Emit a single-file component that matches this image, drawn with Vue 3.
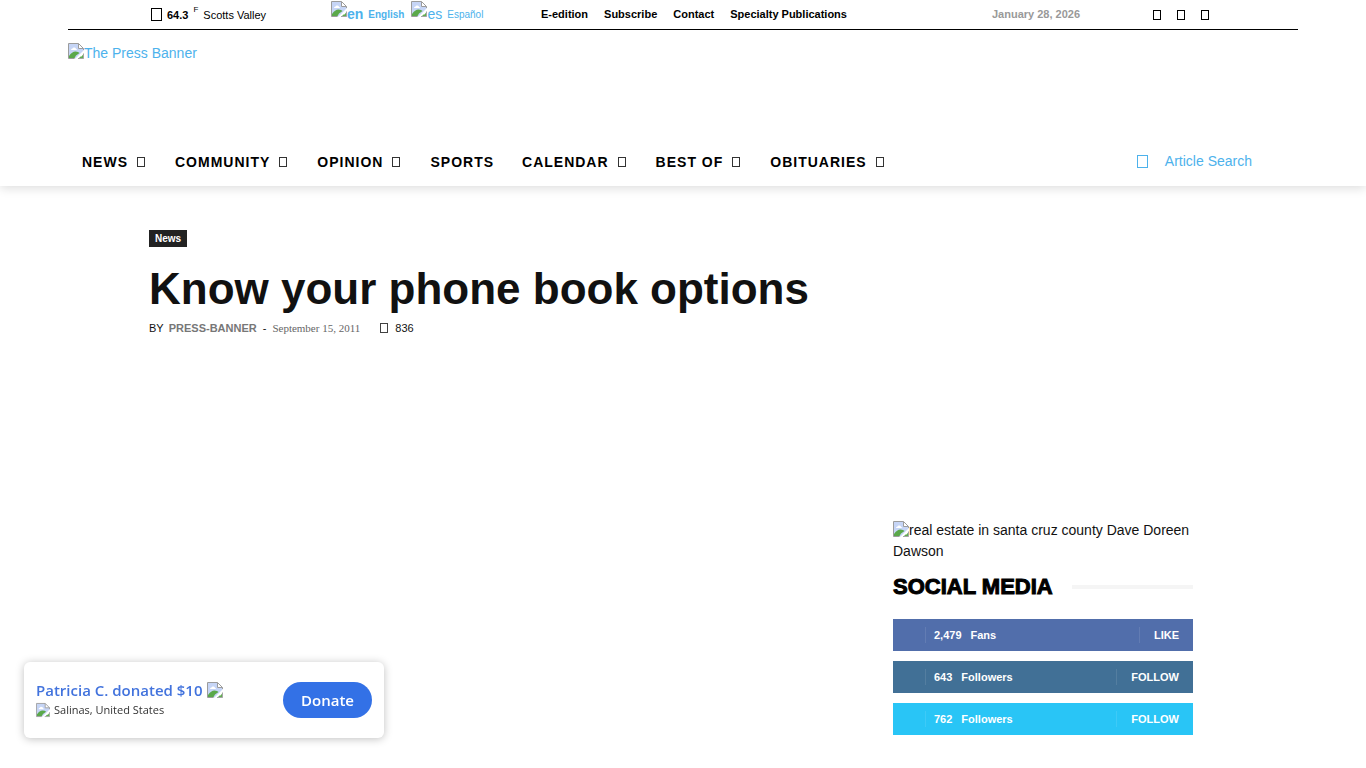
<template>
  <div class="page">
    <svg class="symbols" aria-hidden="true">
      <symbol id="broken-image" viewBox="0 0 16 16">
        <path d="M0.5 0.5H10.500L15.500 5.500V7.500L7.500 15.500H0.5Z" fill="#c6d5f6" />
        <path d="M3 7Q3 5.500 4.500 5.500Q5 4 6.500 4.500Q8 4.500 8 6Q9 6 9 7Z" fill="#fff" />
        <path d="M1 15V13Q4 8.500 7.500 8.500Q10.500 8.500 11.500 10L8 12.500L6.500 15Z" fill="#5aa84a" />
        <path d="M0.5 15.500V0.5H10.500M0.5 15.500H6.500M15.500 5.500V7" fill="none" stroke="#9c9c9c" />
        <path d="M10.500 0.5V5.500H15.500Z" fill="#fff" stroke="#9c9c9c" />
        <path d="M15.500 11V15.500H10.500L12.500 13.500H13.500Z" fill="#62ac52" />
        <path d="M15.500 10.500V15.500H10" fill="none" stroke="#a5a5a5" />
      </symbol>
    </svg>

    <header class="site-header">
      <div class="top-bar">
        <div class="weather">
          <i class="glyph glyph-large"></i>
          <b>64.3</b>
          <sup>F</sup>
          <span>Scotts Valley</span>
        </div>
        <div class="languages">
          <a href="#" class="current">
            <svg class="broken"><use href="#broken-image" /></svg><span class="alt">en</span>
            <span class="lang-name">English</span>
          </a>
          <a href="#">
            <svg class="broken"><use href="#broken-image" /></svg><span class="alt">es</span>
            <span class="lang-name">Español</span>
          </a>
        </div>
        <nav class="top-menu">
          <a v-for="link in topLinks" :key="link" href="#">{{ link }}</a>
        </nav>
        <div class="date">January 28, 2026</div>
        <div class="top-social">
          <a v-for="name in networks" :key="name" href="#" :aria-label="name"><i class="glyph"></i></a>
        </div>
      </div>

      <a href="#" class="logo">
        <svg class="broken"><use href="#broken-image" /></svg><span>The Press Banner</span>
      </a>

      <div class="nav-row">
        <nav class="main-menu">
          <a v-for="item in menu" :key="item.label" href="#">
            {{ item.label }}<i v-if="item.children" class="glyph glyph-thin"></i>
          </a>
        </nav>
        <a href="#" class="search">
          <i class="glyph glyph-large"></i>
          <span>Article Search</span>
        </a>
      </div>
    </header>

    <main class="content">
      <a href="#" class="category">News</a>
      <h1>Know your phone book options</h1>
      <div class="meta">
        <span class="by">BY</span>
        <a href="#" class="author">PRESS-BANNER</a>
        <span class="dash">-</span>
        <time datetime="2011-09-15">September 15, 2011</time>
        <span class="views"><i class="glyph glyph-thin"></i>836</span>
      </div>

      <aside class="sidebar">
        <a href="#" class="ad">
          <svg class="broken"><use href="#broken-image" /></svg>real estate in santa cruz county Dave Doreen Dawson
        </a>
        <h2><span>SOCIAL MEDIA</span></h2>
        <ul class="counters">
          <li v-for="item in counters" :key="item.network" :class="item.network">
            <span class="count">{{ item.count }}</span>
            <span class="unit">{{ item.unit }}</span>
            <a href="#">{{ item.action }}</a>
          </li>
        </ul>
      </aside>
    </main>

    <div class="donation">
      <div class="donation-text">
        <div class="donor">
          <span>Patricia C. donated $10</span>
          <svg class="broken"><use href="#broken-image" /></svg>
        </div>
        <div class="place">
          <svg class="broken pin" preserveAspectRatio="none"><use href="#broken-image" /></svg>
          <span>Salinas, United States</span>
        </div>
      </div>
      <button type="button">Donate</button>
    </div>
  </div>
</template>

<script setup>
import { ref } from 'vue';

const topLinks = ['E-edition', 'Subscribe', 'Contact', 'Specialty Publications'];
const networks = ['Facebook', 'Instagram', 'Twitter'];

const menu = [
  { label: 'NEWS', children: true },
  { label: 'COMMUNITY', children: true },
  { label: 'OPINION', children: true },
  { label: 'SPORTS', children: false },
  { label: 'CALENDAR', children: true },
  { label: 'BEST OF', children: true },
  { label: 'OBITUARIES', children: true }
];

const counters = ref([
  { network: 'facebook', count: '2,479', unit: 'Fans', action: 'LIKE' },
  { network: 'instagram', count: '643', unit: 'Followers', action: 'FOLLOW' },
  { network: 'twitter', count: '762', unit: 'Followers', action: 'FOLLOW' }
]);
</script>

<style>
body {
  margin: 0;
  background: #fff;
}
</style>

<style scoped>
.page {
  min-height: 100vh;
  font-family: 'Liberation Sans', Arial, sans-serif;
  font-size: 14px;
  color: #111;
}

a {
  color: inherit;
  text-decoration: none;
}

.symbols {
  position: absolute;
  width: 0;
  height: 0;
}

.broken {
  flex: none;
  width: 16px;
  height: 16px;
}

/* empty box for a missing icon glyph */
.glyph {
  display: inline-block;
  flex: none;
  box-sizing: border-box;
  width: 8px;
  height: 10px;
  border: 1px solid currentColor;
}

.glyph-large {
  width: 11px;
  height: 13px;
}

.glyph-thin {
  opacity: 0.8;
}

/* header */
.site-header {
  padding: 0 68px;
  box-shadow: 0 2px 10px rgba(0, 0, 0, 0.14);
}

.top-bar {
  display: grid;
  grid-template-columns: 180fr 210fr 451fr 161fr 145fr;
  align-items: center;
  height: 29px;
  padding-left: 83px;
  border-bottom: 1px solid #000;
  font-size: 11px;
  color: #000;
  white-space: nowrap;
}

.weather {
  display: flex;
  align-items: center;
  gap: 5px;
  line-height: 14px;
}

.weather sup {
  align-self: flex-start;
  font-size: 8px;
  line-height: 4px;
}

.languages {
  display: flex;
  gap: 7px;
  color: #4db2ec;
  font-size: 10px;
}

.languages a {
  display: flex;
  align-items: flex-start;
}

.languages .current {
  font-weight: bold;
}

.alt {
  font-size: 14px;
  line-height: 26px;
}

.lang-name {
  margin-left: 5px;
  line-height: 28px;
}

.top-menu {
  display: flex;
  gap: 16px;
  padding-bottom: 2px;
  font-weight: bold;
}

.date {
  padding-bottom: 1px;
  font-weight: bold;
  color: #999;
}

.top-social {
  display: flex;
  gap: 16px;
}

.top-social a {
  display: flex;
}

.logo {
  display: flex;
  align-items: flex-start;
  height: 94px;
  padding-top: 13px;
  color: #4db2ec;
  line-height: 20px;
}

.nav-row {
  display: flex;
  justify-content: space-between;
  align-items: center;
  height: 49px;
  padding: 0 46px 0 14px;
}

.main-menu {
  display: flex;
  gap: 28px;
  font-weight: bold;
  letter-spacing: 1px;
  color: #000;
}

.main-menu a {
  display: flex;
  align-items: center;
}

.main-menu .glyph {
  margin: 0 2px 0 9px;
}

.search {
  display: flex;
  align-items: center;
  gap: 17px;
  padding-bottom: 1px;
  color: #4db2ec;
}

/* article */
.content {
  display: flex;
  flex-direction: column;
  align-items: flex-start;
  padding: 44px 149px 33px;
}

.category {
  padding: 0 6px;
  background: #222;
  color: #fff;
  font-size: 10px;
  font-weight: bold;
  line-height: 17px;
}

h1 {
  margin: 17px 0 7px;
  font-size: 44px;
  line-height: 50px;
}

.meta {
  display: flex;
  align-items: center;
  font-size: 11px;
  line-height: 14px;
}

.author {
  margin-left: 5px;
  font-weight: bold;
  color: #777;
}

.dash {
  margin: 0 6px;
}

.meta time {
  font-family: 'Liberation Serif', 'Times New Roman', serif;
  color: #666;
}

.views {
  display: flex;
  align-items: center;
  gap: 7px;
  margin-left: 20px;
}

/* sidebar */
.sidebar {
  align-self: flex-end;
  width: 300px;
  margin: 185px 24px 0 0;
}

.ad {
  display: block;
  line-height: 21px;
}

.ad .broken {
  vertical-align: -2px;
}

h2 {
  display: flex;
  align-items: center;
  gap: 19px;
  margin: 10px 0 17px;
  font-size: 22px;
  font-weight: 900;
  line-height: 30px;
  color: #000;
  -webkit-text-stroke: 1px #000;
}

h2::after {
  content: '';
  flex: 1;
  height: 4px;
  background: #f5f5f5;
}

.counters {
  display: flex;
  flex-direction: column;
  gap: 10px;
  margin: 0;
  padding: 0;
  list-style: none;
  color: #fff;
  font-size: 11px;
  font-weight: bold;
}

.counters li {
  display: flex;
  align-items: center;
  height: 32px;
  padding-right: 14px;
}

.counters li::before {
  content: '';
  width: 32px;
  height: 16px;
  border-right: 1px solid rgba(255, 255, 255, 0.1);
}

.count {
  margin: 0 9px 0 8px;
}

.counters a {
  margin-left: auto;
  padding-left: 14px;
  border-left: 1px solid rgba(255, 255, 255, 0.1);
  line-height: 16px;
}

.facebook {
  background: #516eab;
}

.instagram {
  background: #417096;
}

.twitter {
  background: #29c5f6;
}

/* donation notice */
.donation {
  position: fixed;
  left: 24px;
  bottom: 30px;
  display: flex;
  justify-content: space-between;
  align-items: center;
  box-sizing: border-box;
  width: 360px;
  height: 76px;
  padding: 0 12px;
  border-radius: 6px;
  background: #fff;
  box-shadow: 0 1px 8px rgba(0, 0, 0, 0.25);
  font-family: 'Open Sans', 'Segoe UI', sans-serif;
}

.donor,
.place {
  display: flex;
  align-items: center;
  gap: 4px;
}

.donor {
  color: #4273dd;
  font-size: 15px;
  font-weight: 600;
  line-height: 20px;
}

.place {
  color: #333;
  font-size: 11px;
  line-height: 20px;
}

.pin {
  width: 14px;
}

.donation button {
  height: 36px;
  padding: 0 18px;
  border: 0;
  border-radius: 18px;
  background: #3371e6;
  color: #fff;
  font-family: inherit;
  font-size: 15px;
  font-weight: 600;
}
</style>
